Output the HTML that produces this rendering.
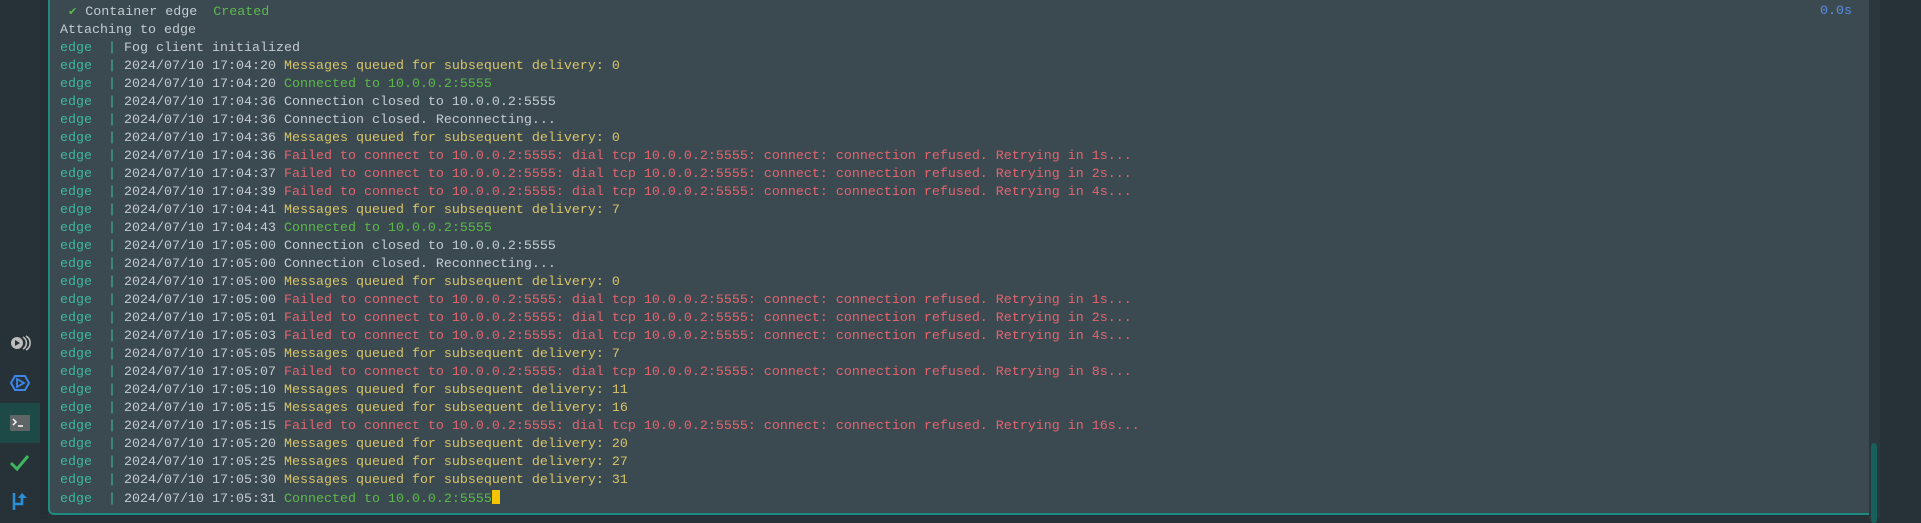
<!DOCTYPE html>
<html><head><meta charset="utf-8"><style>
html,body{margin:0;padding:0;width:1921px;height:519px;overflow:hidden;background:#263238;}
.side{position:absolute;left:0;top:0;width:40px;height:519px;background:#263238;}
.strip{position:absolute;left:40px;top:0;width:8px;height:519px;background:#252e35;}
.panel{position:absolute;left:48px;top:-4px;width:1819px;height:517px;background:#3b4950;border-left:2px solid #1f8a80;border-bottom:2px solid #1f8a80;border-bottom-left-radius:6px;}
.sb{position:absolute;left:1869px;top:0;width:11px;height:519px;background:#2b363d;}
.thumb{position:absolute;left:1871px;top:443px;width:6px;height:80px;background:#18605c;border-radius:3px;}
pre{position:absolute;left:60px;top:3px;margin:0;font-family:"Liberation Mono",monospace;font-size:13.33px;line-height:18px;color:#c3ccd2;white-space:pre;}
.e{color:#3fb7a0}.y{color:#d8c46a}.g{color:#5cba4a}.r{color:#e4646e}.p{color:#3fb7a0}
.ck{color:#5cba4a;font-family:"DejaVu Sans",sans-serif;font-size:11px;}
.cur{display:inline-block;width:8px;height:14px;background:#f5c400;vertical-align:-2px;}
.t{position:absolute;left:1820px;top:3px;font-family:"Liberation Mono",monospace;font-size:13.33px;line-height:18px;color:#5b8fe0;}
.sel{position:absolute;left:0;top:403px;width:40px;height:40px;background:#1d4a47;}
</style></head><body>
<div class="side"></div><div class="strip"></div>
<div class="sel"></div>
<svg style="position:absolute;left:0;top:330px" width="40" height="189">
<circle cx="17" cy="13" r="6" fill="#bdbdbd"/><path d="M15 10 L20 13 L15 16Z" fill="#263238"/>
<path d="M23 7 A7 7 0 0 1 23 19 M26 6 A8 8 0 0 1 26 20" stroke="#bdbdbd" stroke-width="1.6" fill="none"/>
<path d="M15 46 L25 46 L29 53 L25 60 L15 60 L11 53Z" stroke="#3d85e8" stroke-width="2" fill="none"/>
<path d="M17 49 L24 53 L17 57Z" stroke="#3d85e8" stroke-width="1.8" fill="none"/>
<rect x="10" y="85" width="20" height="16" rx="1" fill="#5f6467"/>
<path d="M13 89 L16 92 L13 95" stroke="#fff" stroke-width="1.5" fill="none"/><path d="M18 96 H23" stroke="#fff" stroke-width="1.5"/>
<path d="M11 133 L17 139 L28 126" stroke="#3fb55c" stroke-width="3" fill="none"/>
<path d="M14 163 V180 M14 174 H22 V166" stroke="#2a8fd6" stroke-width="2.5" fill="none"/><path d="M18 168 L22 163 L27 168Z" fill="#2a8fd6"/>
</svg>
<div class="panel"></div>
<div class="sb"></div><div class="thumb"></div>
<div class="t">0.0s</div>
<pre> <span class="ck">✔</span> Container edge  <span class="g">Created</span>
Attaching to edge
<span class="e">edge</span>  <span class="p">|</span> Fog client initialized
<span class="e">edge</span>  <span class="p">|</span> 2024/07/10 17:04:20 <span class="y">Messages queued for subsequent delivery: 0</span>
<span class="e">edge</span>  <span class="p">|</span> 2024/07/10 17:04:20 <span class="g">Connected to 10.0.0.2:5555</span>
<span class="e">edge</span>  <span class="p">|</span> 2024/07/10 17:04:36 Connection closed to 10.0.0.2:5555
<span class="e">edge</span>  <span class="p">|</span> 2024/07/10 17:04:36 Connection closed. Reconnecting...
<span class="e">edge</span>  <span class="p">|</span> 2024/07/10 17:04:36 <span class="y">Messages queued for subsequent delivery: 0</span>
<span class="e">edge</span>  <span class="p">|</span> 2024/07/10 17:04:36 <span class="r">Failed to connect to 10.0.0.2:5555: dial tcp 10.0.0.2:5555: connect: connection refused. Retrying in 1s...</span>
<span class="e">edge</span>  <span class="p">|</span> 2024/07/10 17:04:37 <span class="r">Failed to connect to 10.0.0.2:5555: dial tcp 10.0.0.2:5555: connect: connection refused. Retrying in 2s...</span>
<span class="e">edge</span>  <span class="p">|</span> 2024/07/10 17:04:39 <span class="r">Failed to connect to 10.0.0.2:5555: dial tcp 10.0.0.2:5555: connect: connection refused. Retrying in 4s...</span>
<span class="e">edge</span>  <span class="p">|</span> 2024/07/10 17:04:41 <span class="y">Messages queued for subsequent delivery: 7</span>
<span class="e">edge</span>  <span class="p">|</span> 2024/07/10 17:04:43 <span class="g">Connected to 10.0.0.2:5555</span>
<span class="e">edge</span>  <span class="p">|</span> 2024/07/10 17:05:00 Connection closed to 10.0.0.2:5555
<span class="e">edge</span>  <span class="p">|</span> 2024/07/10 17:05:00 Connection closed. Reconnecting...
<span class="e">edge</span>  <span class="p">|</span> 2024/07/10 17:05:00 <span class="y">Messages queued for subsequent delivery: 0</span>
<span class="e">edge</span>  <span class="p">|</span> 2024/07/10 17:05:00 <span class="r">Failed to connect to 10.0.0.2:5555: dial tcp 10.0.0.2:5555: connect: connection refused. Retrying in 1s...</span>
<span class="e">edge</span>  <span class="p">|</span> 2024/07/10 17:05:01 <span class="r">Failed to connect to 10.0.0.2:5555: dial tcp 10.0.0.2:5555: connect: connection refused. Retrying in 2s...</span>
<span class="e">edge</span>  <span class="p">|</span> 2024/07/10 17:05:03 <span class="r">Failed to connect to 10.0.0.2:5555: dial tcp 10.0.0.2:5555: connect: connection refused. Retrying in 4s...</span>
<span class="e">edge</span>  <span class="p">|</span> 2024/07/10 17:05:05 <span class="y">Messages queued for subsequent delivery: 7</span>
<span class="e">edge</span>  <span class="p">|</span> 2024/07/10 17:05:07 <span class="r">Failed to connect to 10.0.0.2:5555: dial tcp 10.0.0.2:5555: connect: connection refused. Retrying in 8s...</span>
<span class="e">edge</span>  <span class="p">|</span> 2024/07/10 17:05:10 <span class="y">Messages queued for subsequent delivery: 11</span>
<span class="e">edge</span>  <span class="p">|</span> 2024/07/10 17:05:15 <span class="y">Messages queued for subsequent delivery: 16</span>
<span class="e">edge</span>  <span class="p">|</span> 2024/07/10 17:05:15 <span class="r">Failed to connect to 10.0.0.2:5555: dial tcp 10.0.0.2:5555: connect: connection refused. Retrying in 16s...</span>
<span class="e">edge</span>  <span class="p">|</span> 2024/07/10 17:05:20 <span class="y">Messages queued for subsequent delivery: 20</span>
<span class="e">edge</span>  <span class="p">|</span> 2024/07/10 17:05:25 <span class="y">Messages queued for subsequent delivery: 27</span>
<span class="e">edge</span>  <span class="p">|</span> 2024/07/10 17:05:30 <span class="y">Messages queued for subsequent delivery: 31</span>
<span class="e">edge</span>  <span class="p">|</span> 2024/07/10 17:05:31 <span class="g">Connected to 10.0.0.2:5555</span><span class="cur"></span></pre>
</body></html>
